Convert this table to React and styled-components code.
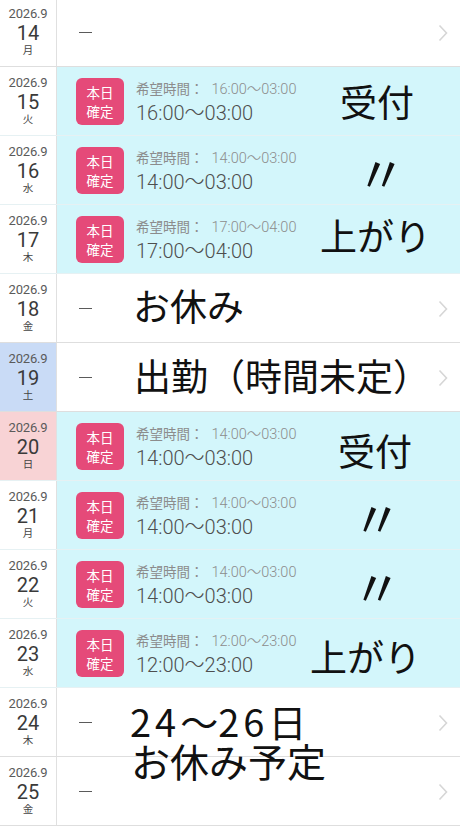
import React from "react";
import styled, { createGlobalStyle } from "styled-components";

const Global = createGlobalStyle`
  html, body { margin: 0; padding: 0; background: #fff; }
  body { font-family: "Roboto", "Noto Sans CJK JP", sans-serif; overflow: hidden; }
  * { box-sizing: border-box; }
`;

const Page = styled.div`
  position: relative;
  width: 460px;
  height: 827px;
  overflow: hidden;
  background: #fff;
`;

const List = styled.div`
  display: flex;
  flex-direction: column;
  margin-top: -2px;
`;

const Row = styled.div`
  display: grid;
  grid-template-columns: 57px 1fr;
  height: 69px;
  border-bottom: 1px solid ${(p) => (p.$confirmed ? "#e6f1f3" : "#dedede")};
`;

const DateCell = styled.div`
  display: flex;
  flex-direction: column;
  align-items: center;
  padding-top: 9px;
  border-right: 1px solid #e0e0e0;
  background: ${(p) =>
    p.$tone === "sat" ? "#c9dbf6" : p.$tone === "sun" ? "#f8d3d5" : "#fff"};
`;

const Year = styled.div`
  font-family: "Roboto", sans-serif;
  font-size: 13px;
  line-height: 14px;
  color: #5a5a5a;
  letter-spacing: -0.2px;
`;

const Day = styled.div`
  font-family: "Roboto", sans-serif;
  font-size: 20px;
  line-height: 20px;
  color: #3a3a3a;
  margin-top: 2px;
`;

const Weekday = styled.div`
  font-family: "Noto Sans CJK JP", sans-serif;
  font-size: 10.5px;
  line-height: 14px;
  color: #444;
`;

const Body = styled.div`
  display: flex;
  align-items: center;
  padding-left: 19px;
  padding-right: 12px;
  background: ${(p) => (p.$confirmed ? "#d3f6fb" : "#fff")};
`;

const Dash = styled.div`
  width: 13px;
  height: 1.6px;
  background: #5a5a5a;
  margin-left: 3px;
  margin-top: 1px;
`;

const Spacer = styled.div`
  flex: 1;
`;

const Badge = styled.div`
  width: 48px;
  height: 47px;
  border-radius: 6px;
  background: #e54a79;
  color: #fff;
  display: flex;
  flex-direction: column;
  align-items: center;
  justify-content: center;
  font-family: "Noto Sans CJK JP", sans-serif;
  font-size: 13.5px;
  line-height: 19px;
  margin-top: 1px;
`;

const Times = styled.div`
  display: flex;
  flex-direction: column;
  margin-left: 12px;
  margin-top: 1px;
`;

const Wish = styled.div`
  font-family: "Roboto", "Noto Sans CJK JP", sans-serif;
  font-size: 14.5px;
  line-height: 20px;
  color: #8c8c8c;
  font-weight: 300;
  & span {
    font-family: "Noto Sans CJK JP", sans-serif;
    font-size: 13.5px;
    font-weight: 400;
    margin-right: 8px;
  }
`;

const Main = styled.div`
  font-family: "Roboto", "Noto Sans CJK JP", sans-serif;
  font-size: 20px;
  line-height: 26px;
  color: #4e4e4e;
  font-weight: 300;
`;

const Chevron = () => (
  <svg width="10" height="18" viewBox="0 0 10 18" style={{ marginTop: 1 }}>
    <polyline points="1.5,1.5 8.5,9 1.5,16.5" fill="none" stroke="#d6d6d6" strokeWidth="1.6" />
  </svg>
);

const Note = styled.div`
  position: absolute;
  left: ${(p) => p.$x}px;
  top: ${(p) => p.$y}px;
  font-family: "Noto Sans CJK JP", sans-serif;
  font-size: ${(p) => p.$size || 37}px;
  line-height: 1;
  color: #111;
  white-space: nowrap;
  pointer-events: none;
`;

const Wide = styled.span`
  letter-spacing: 4px;
`;

const rows = [
  { d: 14, w: "月" },
  { d: 15, w: "火", t: "16:00〜03:00" },
  { d: 16, w: "水", t: "14:00〜03:00" },
  { d: 17, w: "木", t: "17:00〜04:00" },
  { d: 18, w: "金" },
  { d: 19, w: "土", tone: "sat" },
  { d: 20, w: "日", tone: "sun", t: "14:00〜03:00" },
  { d: 21, w: "月", t: "14:00〜03:00" },
  { d: 22, w: "火", t: "14:00〜03:00" },
  { d: 23, w: "水", t: "12:00〜23:00" },
  { d: 24, w: "木" },
  { d: 25, w: "金" },
];

export default function App() {
  return (
    <Page>
      <Global />
      <List>
        {rows.map((r) => (
          <Row key={r.d} $confirmed={!!r.t}>
            <DateCell $tone={r.tone}>
              <Year>2026.9</Year>
              <Day>{r.d}</Day>
              <Weekday>{r.w}</Weekday>
            </DateCell>
            <Body $confirmed={!!r.t}>
              {r.t ? (
                <>
                  <Badge>
                    <div>本日</div>
                    <div>確定</div>
                  </Badge>
                  <Times>
                    <Wish>
                      <span>希望時間：</span>
                      {r.t}
                    </Wish>
                    <Main>{r.t}</Main>
                  </Times>
                </>
              ) : (
                <>
                  <Dash />
                  <Spacer />
                  <Chevron />
                </>
              )}
            </Body>
          </Row>
        ))}
      </List>
      <Note $x={340} $y={83}>受付</Note>
      <Note $x={356} $y={146} $size={50}>〃</Note>
      <Note $x={320} $y={217}>上がり</Note>
      <Note $x={133} $y={287}>お休み</Note>
      <Note $x={134} $y={357}>出勤（時間未定）</Note>
      <Note $x={338} $y={432}>受付</Note>
      <Note $x={352} $y={491} $size={50}>〃</Note>
      <Note $x={352} $y={560} $size={50}>〃</Note>
      <Note $x={310} $y={638}>上がり</Note>
      <Note $x={130} $y={702} $size={38}>
        <Wide>24</Wide>〜<Wide>26</Wide>日
      </Note>
      <Note $x={131} $y={741} $size={39}>お休み予定</Note>
    </Page>
  );
}
